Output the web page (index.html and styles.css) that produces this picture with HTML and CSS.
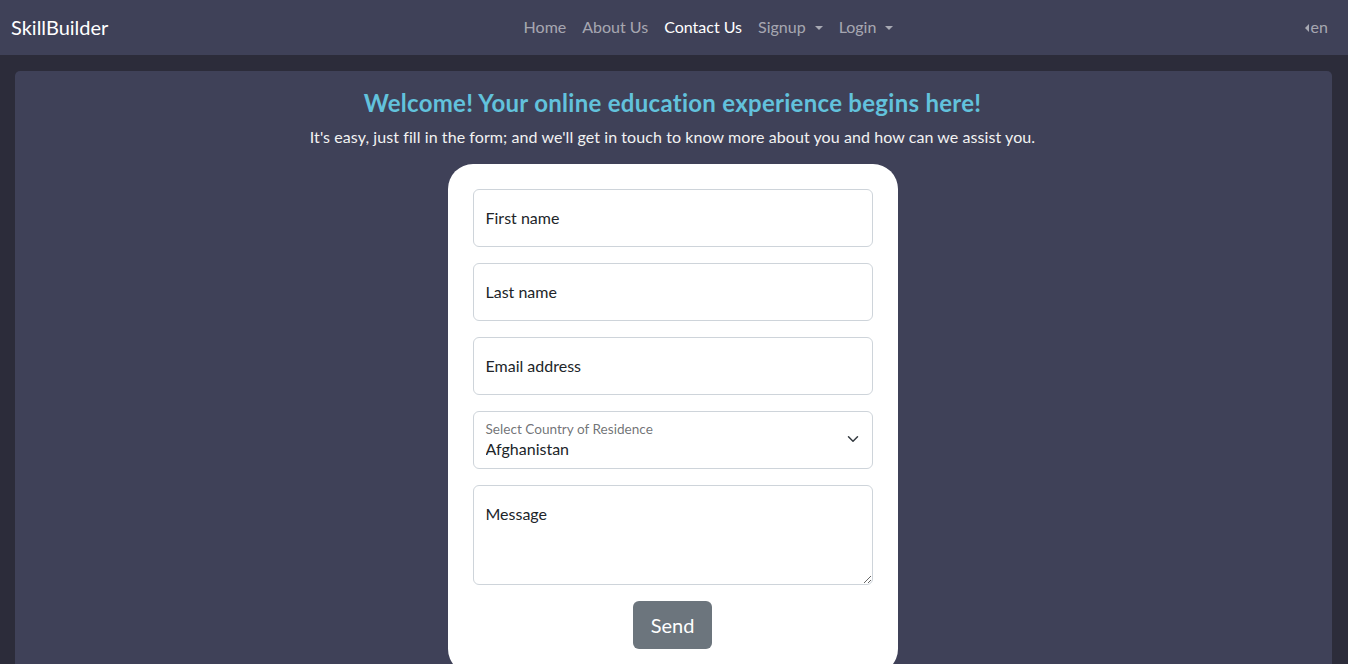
FILE: index.html
```html
<!DOCTYPE html>
<html lang="en">
<head>
<meta charset="utf-8">
<title>SkillBuilder - Contact Us</title>
<link rel="stylesheet" href="styles.css">
</head>
<body>
<nav class="navbar">
  <a class="brand" href="#">SkillBuilder</a>
  <ul class="nav-links">
    <li><a href="#">Home</a></li>
    <li><a href="#">About Us</a></li>
    <li><a href="#" class="active">Contact Us</a></li>
    <li><a href="#" class="dropdown">Signup</a></li>
    <li><a href="#" class="dropdown">Login</a></li>
  </ul>
  <a class="lang" href="#"><span class="lang-caret"></span>en</a>
</nav>
<main class="page">
  <section class="panel">
    <h4 class="title">Welcome! Your online education experience begins here!</h4>
    <p class="lead">It's easy, just fill in the form; and we'll get in touch to know more about you and how can we assist you.</p>
    <form class="form-card">
      <input class="field" type="text" placeholder="First name">
      <input class="field" type="text" placeholder="Last name">
      <input class="field" type="email" placeholder="Email address">
      <div class="select-wrap">
        <label class="select-label">Select Country of Residence</label>
        <select class="field select">
          <option>Afghanistan</option>
        </select>
        <svg class="chev" width="16" height="16" viewBox="0 0 16 16"><path d="M2 5l6 6 6-6" fill="none" stroke="#343a40" stroke-width="2" stroke-linecap="round" stroke-linejoin="round"/></svg>
      </div>
      <textarea class="field area" placeholder="Message"></textarea>
      <div class="actions"><button type="button" class="btn">Send</button></div>
    </form>
  </section>
</main>
</body>
</html>
```

FILE: styles.css
```css
* { box-sizing: border-box; }
html, body { margin: 0; padding: 0; }
body {
  background: #2c2c3a;
  font-family: "Lato", "Liberation Sans", sans-serif;
  color: #212529;
  height: 664px;
  overflow: hidden;
}
.navbar {
  height: 55px;
  background: #3f4158;
  display: flex;
  align-items: center;
  justify-content: space-between;
  padding: 0 20px 2px 11px;
}
.brand {
  color: #fff;
  font-size: 20px;
  text-decoration: none;
  width: 278px;
}
.nav-links {
  list-style: none;
  display: flex;
  margin: 0;
  padding: 0;
}
.nav-links a {
  display: block;
  padding: 8px 8px;
  font-size: 16px;
  color: rgba(255,255,255,0.55);
  text-decoration: none;
  line-height: 24px;
}
.nav-links a.active { color: #fff; }
.nav-links a.dropdown::after {
  content: "";
  display: inline-block;
  margin-left: 9px;
  vertical-align: 3px;
  border-top: 4px solid;
  border-left: 4px solid transparent;
  border-right: 4px solid transparent;
}
.lang {
  width: 200px;
  text-align: right;
  color: rgba(255,255,255,0.55);
  text-decoration: none;
  font-size: 16px;
}
.lang-caret {
  display: inline-block;
  border-right: 4px solid;
  border-top: 4px solid transparent;
  border-bottom: 4px solid transparent;
  margin-right: 2px;
  vertical-align: 1px;
}
.page { padding: 16px 16px 0 15px; }
.panel {
  background: #3f4158;
  border-radius: 5px;
  padding: 18px 18px 20px 16px;
  display: flex;
  flex-direction: column;
  align-items: center;
  min-height: 620px;
}
.title {
  margin: 0 0 7px;
  font-size: 24px;
  font-weight: 700;
  line-height: 1.2;
  letter-spacing: 0.28px;
  color: #62c2dc;
}
.lead {
  margin: 0 0 15px;
  font-size: 16px;
  line-height: 24px;
  letter-spacing: 0.08px;
  color: #f2f2f2;
}
.form-card {
  width: 450px;
  background: #fff;
  border-radius: 25px;
  padding: 25px;
  display: flex;
  flex-direction: column;
  gap: 16px;
}
.field {
  display: block;
  width: 100%;
  height: 58px;
  border: 1px solid #ced4da;
  border-radius: 6px;
  padding: 16px 12px;
  font-family: inherit;
  font-size: 16px;
  line-height: 24px;
  color: #212529;
  background: #fff;
}
.field::placeholder { color: #212529; opacity: 1; }
.select-wrap { position: relative; }
.select {
  appearance: none;
  -webkit-appearance: none;
  padding: 25px 36px 6px 12px;
}
.select-label {
  position: absolute;
  left: 13px;
  top: 10px;
  font-size: 13.6px;
  color: rgba(33,37,41,0.65);
}
.chev {
  position: absolute;
  right: 14px;
  top: 22px;
  width: 12px;
  height: 12px;
}
.area { height: 100px; resize: vertical; }
.actions { display: flex; justify-content: center; }
.btn {
  background: #6c757d;
  color: #fff;
  border: none;
  border-radius: 6px;
  font-family: inherit;
  font-size: 20px;
  line-height: 30px;
  padding: 9px 18px;
}
```
